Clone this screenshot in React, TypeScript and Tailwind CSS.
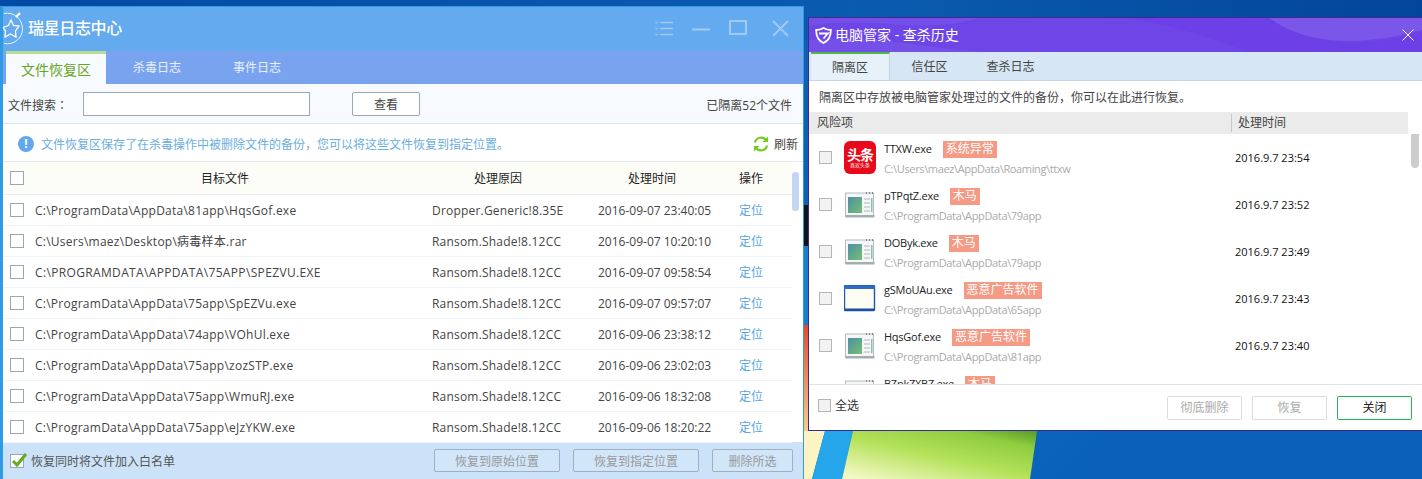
const FONT = "font-['Open_Sans','Noto_Sans_CJK_SC',sans-serif]";

const leftRows = [
  ["C:\\ProgramData\\AppData\\81app\\HqsGof.exe", "Dropper.Generic!8.35E", "2016-09-07 23:40:05"],
  ["C:\\Users\\maez\\Desktop\\病毒样本.rar", "Ransom.Shade!8.12CC", "2016-09-07 10:20:10"],
  ["C:\\PROGRAMDATA\\APPDATA\\75APP\\SPEZVU.EXE", "Ransom.Shade!8.12CC", "2016-09-07 09:58:54"],
  ["C:\\ProgramData\\AppData\\75app\\SpEZVu.exe", "Ransom.Shade!8.12CC", "2016-09-07 09:57:07"],
  ["C:\\ProgramData\\AppData\\74app\\VOhUl.exe", "Ransom.Shade!8.12CC", "2016-09-06 23:38:12"],
  ["C:\\ProgramData\\AppData\\75app\\zozSTP.exe", "Ransom.Shade!8.12CC", "2016-09-06 23:02:03"],
  ["C:\\ProgramData\\AppData\\75app\\WmuRJ.exe", "Ransom.Shade!8.12CC", "2016-09-06 18:32:08"],
  ["C:\\ProgramData\\AppData\\75app\\eJzYKW.exe", "Ransom.Shade!8.12CC", "2016-09-06 18:20:22"],
];

const rightRows = [
  { name: "TTXW.exe", tag: "系统异常", path: "C:\\Users\\maez\\AppData\\Roaming\\ttxw", date: "2016.9.7 23:54", icon: "red" },
  { name: "pTPqtZ.exe", tag: "木马", path: "C:\\ProgramData\\AppData\\79app", date: "2016.9.7 23:52", icon: "app" },
  { name: "DOByk.exe", tag: "木马", path: "C:\\ProgramData\\AppData\\79app", date: "2016.9.7 23:49", icon: "app" },
  { name: "gSMoUAu.exe", tag: "恶意广告软件", path: "C:\\ProgramData\\AppData\\65app", date: "2016.9.7 23:43", icon: "win" },
  { name: "HqsGof.exe", tag: "恶意广告软件", path: "C:\\ProgramData\\AppData\\81app", date: "2016.9.7 23:40", icon: "app" },
  { name: "BZpkZXBZ.exe", tag: "木马", path: "", date: "", icon: "app" },
];

function Wallpaper() {
  return (
    <svg className="absolute inset-0" width="1422" height="479" viewBox="0 0 1422 479">
      <defs>
        <linearGradient id="top" x1="0" x2="1" y1="0" y2="0">
          <stop offset="0" stopColor="#0349a6" />
          <stop offset="0.6" stopColor="#0a5cb0" />
          <stop offset="1" stopColor="#03459a" />
        </linearGradient>
        <linearGradient id="bot" x1="0" x2="1" y1="0" y2="0.3">
          <stop offset="0" stopColor="#1292ea" />
          <stop offset="1" stopColor="#0a5fb8" />
        </linearGradient>
        <linearGradient id="leaf" x1="0.1" x2="1" y1="1" y2="0">
          <stop offset="0" stopColor="#f2f9c4" />
          <stop offset="0.45" stopColor="#b4e25a" />
          <stop offset="0.8" stopColor="#8fcc40" />
          <stop offset="1" stopColor="#569a26" />
        </linearGradient>
        <linearGradient id="edge" x1="0" x2="0" y1="0" y2="1">
          <stop offset="0" stopColor="#e8482a" />
          <stop offset="1" stopColor="#f5d48a" />
        </linearGradient>
      </defs>
      <rect width="1422" height="479" fill="url(#bot)" />
      <rect width="1422" height="40" fill="url(#top)" />
      <rect x="804" y="40" width="4" height="165" fill="#0d60b2" />
      <rect x="804" y="205" width="4" height="41" fill="#10131a" />
      <rect x="804" y="246" width="4" height="79" fill="#1a7ec8" />
      <rect x="804" y="325" width="4" height="110" fill="url(#edge)" />
      <polygon points="804,431 825,431 812,479 804,479" fill="#fdf4c4" />
      <polygon points="825,431 853,431 842,479 812,479" fill="#25a6ea" />
      <polygon points="853,431 1037,431 1030,479 842,479" fill="url(#leaf)" />
    </svg>
  );
}

function StarLogo() {
  return (
    <svg width="22" height="34" viewBox="0 0 22 34" fill="none" stroke="#fff" className="shrink-0">
      <path d="M1 1.5 C11 -0.5 19.5 7 19.5 17 C19.5 26 11 33.5 1 31.5" strokeWidth="1" opacity="0.85" />
      <path d="M8 8 L10.5 13.5 L16 14 L12.5 19 L13 25 L7.5 22 L2 25 L2.5 19 L0 15.5 L5.5 13.5 Z" strokeWidth="1.3" />
      <path d="M13 5 L17 1" strokeWidth="2.4" />
    </svg>
  );
}

function WinControls() {
  return (
    <svg width="136" height="20" viewBox="0 0 136 20" fill="none" stroke="#9fcaf5" strokeWidth="1.6" className="shrink-0">
      <path d="M0.5 3.5 h2 M5 3.5 h13 M0.5 9.5 h2 M5 9.5 h13 M0.5 15.5 h2 M5 15.5 h13" />
      <path d="M37 10.5 h18" strokeWidth="2" />
      <rect x="75" y="2" width="16" height="13" strokeWidth="2" />
      <path d="M118 2 L133 17 M133 2 L118 17" strokeWidth="1.8" />
    </svg>
  );
}

function Box({ tone = "left" }: { tone?: "left" | "right" }) {
  return (
    <span
      className={
        tone === "left"
          ? "block h-[14px] w-[14px] shrink-0 border border-[#9aa8b5] bg-white"
          : "block h-[13px] w-[13px] shrink-0 border border-[#b5b5b5] bg-[#f2f2f2]"
      }
    />
  );
}

function AppIcon({ kind }: { kind: string }) {
  if (kind === "red") {
    return (
      <div className="flex h-[33px] w-[32px] shrink-0 flex-col items-center justify-center rounded-[6px] bg-[#e8091a] text-white">
        <span className="text-[14px] font-bold leading-[15px] tracking-[-1px]">头条</span>
        <span className="text-[5px] leading-[6px]">喜欢头条</span>
      </div>
    );
  }
  if (kind === "win") {
    return (
      <svg width="32" height="27" viewBox="0 0 32 27" className="shrink-0">
        <rect x="0.5" y="0.5" width="30" height="25" rx="1" fill="#fdfdf4" stroke="#1f56ad" strokeWidth="1.4" />
        <rect x="0.5" y="0.5" width="30" height="3.5" fill="#2d6cc4" />
        <rect x="0.5" y="23.5" width="30" height="2.5" fill="#1f4fa0" />
      </svg>
    );
  }
  return (
    <svg width="30" height="26" viewBox="0 0 30 26" className="ml-[1px] shrink-0">
      <defs>
        <linearGradient id="scr" x1="0" x2="1" y1="0" y2="1">
          <stop offset="0" stopColor="#4d8fa8" />
          <stop offset="1" stopColor="#76bf72" />
        </linearGradient>
      </defs>
      <rect x="0.5" y="1" width="28" height="23.5" fill="#f4f6f7" stroke="#b4bcc2" />
      <rect x="0.5" y="23" width="29" height="2.5" fill="#a5adb3" />
      <rect x="3" y="5" width="14" height="16" fill="url(#scr)" />
      <path d="M19 7h6M19 11h6M19 15h6M19 19h6" stroke="#d3d7da" strokeWidth="2" />
      <rect x="26" y="6" width="1.5" height="14" fill="#8cc0ae" />
      <path d="M21 1h1M24 1h1M27 1h1" stroke="#666" strokeWidth="1.4" />
    </svg>
  );
}

function LeftWindow() {
  return (
    <div className="absolute left-0 top-[6px] flex h-[473px] w-[804px] flex-col border-l-[3px] border-r border-t border-[#2f9be4] bg-white text-[12px] text-[#444]">
      <div className="flex h-[44px] items-center justify-between bg-[#64aaee] pr-[12px]">
        <div className="flex items-center gap-[3px]">
          <StarLogo />
          <span className="pb-[2px] text-[16px] font-medium leading-none tracking-[-0.35px] text-white">瑞星日志中心</span>
        </div>
        <WinControls />
      </div>
      <div className="flex h-[33px] items-end bg-[#7aa3ef] pl-[3px] text-[#e8f0ff]">
        <div className="flex h-[33px] w-[100px] items-center justify-center border-t-[3px] border-[#b9dc90] bg-[#f7fbff] text-[14px] text-[#6aa51e]">文件恢复区</div>
        <div className="ml-[1px] flex h-[33px] w-[100px] items-center justify-center">杀毒日志</div>
        <div className="flex h-[33px] w-[100px] items-center justify-center">事件日志</div>
      </div>
      <div className="flex h-[40px] items-center justify-between border-b border-[#d5e3ef] bg-[#f7fbff] pl-[5px] pr-[11px]">
        <div className="flex items-center">
          <span className="w-[75px] pt-[4px]">
            文件搜索<span className="font-['Noto_Sans_CJK_TC',sans-serif]">：</span>
          </span>
          <div className="h-[24px] w-[227px] border border-[#9aa8b5] bg-white" />
          <div className="ml-[42px] flex h-[24px] w-[68px] items-center justify-center rounded-[2px] border border-[#9aa8b5] bg-white pt-[2px]">查看</div>
        </div>
        <span className="pt-[4px]">已隔离52个文件</span>
      </div>
      <div className="flex h-[38px] items-center justify-between border-b border-[#e6e9ec] pl-[15px] pr-[5px] pt-[2px]">
        <div className="flex items-center gap-[7px] text-[#6aaee0]">
          <span className="flex h-[16px] w-[16px] items-center justify-center rounded-full bg-[#62a8ee] text-[12px] font-bold leading-none text-white">!</span>
          <span className="pt-[2px]">文件恢复区保存了在杀毒操作中被删除文件的备份，您可以将这些文件恢复到指定位置。</span>
        </div>
        <div className="flex items-center gap-[5px]">
          <svg width="16" height="16" viewBox="0 0 16 16" fill="none" stroke="#76cc1e" strokeWidth="2.2">
            <path d="M2 6.5 A6.2 6.2 0 0 1 13 4" />
            <path d="M14 9.5 A6.2 6.2 0 0 1 3 12" />
            <path d="M15 0.5 V6 H9.5 Z M1 15.5 V10 H6.5 Z" fill="#76cc1e" stroke="none" />
          </svg>
          <span className="pt-[2px]">刷新</span>
        </div>
      </div>
      <div className="relative flex min-h-0 flex-1 flex-col">
        <div className="mr-[11px] flex h-[33px] shrink-0 items-center border-b border-[#e8eef2] bg-[#fdfdf8] pl-[7px] text-[#222]">
          <Box />
          <span className="ml-[11px] w-[397px] pl-[166px] pt-[1px]">目标文件</span>
          <span className="w-[166px] pl-[42px] pt-[1px]">处理原因</span>
          <span className="w-[141px] pl-[30px] pt-[1px]">处理时间</span>
          <span className="pt-[1px]">操作</span>
        </div>
        {leftRows.map((r, i) => (
          <div key={r[2]} className="mr-[11px] flex h-[31px] shrink-0 items-center border-b border-[#f0f4f8] pl-[7px]">
            <Box />
            <span className={i === 2 ? "ml-[11px] w-[397px] truncate pt-[2px] tracking-[0.35px]" : "ml-[11px] w-[397px] truncate pt-[2px] tracking-[0.25px]"}>{r[0]}</span>
            <span className="w-[166px] truncate pt-[2px] tracking-[0.2px]">{r[1]}</span>
            <span className="w-[141px] pt-[2px]">{r[2]}</span>
            <span className="pt-[2px] text-[#5aa5e0]">定位</span>
          </div>
        ))}
        <div className="absolute right-[4px] top-[10px] h-[39px] w-[7px] rounded-[3px] bg-[#c2d6f2]" />
      </div>
      <div className="flex h-[37px] shrink-0 items-center justify-between bg-[#cbe2f9] pl-[7px] pr-[10px] text-[#555]">
        <div className="flex items-center gap-[7px]">
          <span className="relative block h-[14px] w-[14px] border border-[#9aa8b5] bg-white">
            <svg className="absolute -top-[3px] left-0" width="17" height="16" viewBox="0 0 17 16" fill="none" stroke="#62ab1c" strokeWidth="3">
              <path d="M2 9 L6 13 L15 2" />
            </svg>
          </span>
          <span className="pt-[2px]">恢复同时将文件加入白名单</span>
        </div>
        <div className="flex gap-[13px] text-[#999]">
          <div className="flex h-[23px] w-[126px] items-center justify-center rounded-[2px] border border-[#9fb0c0] bg-[#d2e6fa] pt-[2px]">恢复到原始位置</div>
          <div className="flex h-[23px] w-[126px] items-center justify-center rounded-[2px] border border-[#9fb0c0] bg-[#d2e6fa] pt-[2px]">恢复到指定位置</div>
          <div className="flex h-[23px] w-[81px] items-center justify-center rounded-[2px] border border-[#9fb0c0] bg-[#d2e6fa] pt-[2px]">删除所选</div>
        </div>
      </div>
    </div>
  );
}

function RightWindow() {
  return (
    <div className="absolute left-[808px] top-[17px] flex h-[414px] w-[614px] flex-col border-b border-l border-t border-[#3b2a90] bg-white text-[12px] text-[#444]">
      <div className="relative flex h-[34px] items-center justify-between overflow-hidden bg-[#6e45e6] pl-[6px] pr-[8px]">
        <svg className="absolute inset-0" width="613" height="34" viewBox="0 0 613 34">
          <path d="M0 8 C60 -4 110 18 170 0 H0 Z" fill="#7550e8" />
          <path d="M460 0 C490 22 540 32 613 12 V0 Z" fill="#7a57e9" />
          <path d="M0 22 C70 14 120 34 190 34 H0 Z" fill="#7450e8" />
          <path d="M320 0 C370 8 400 20 440 34 H613 V14 C540 34 490 22 460 0 Z" fill="#6d3fe6" />
        </svg>
        <div className="relative flex items-center gap-[3px]">
          <svg width="17" height="17" viewBox="0 0 17 17" fill="none" stroke="#fff" strokeWidth="1.8">
            <path d="M8.5 1 C6 2.6 3.5 3 1.2 3 C1 9 3.5 13.5 8.5 16 C13.5 13.5 16 9 15.8 3 C13.5 3 11 2.6 8.5 1 Z" />
            <path d="M4 6.5 H13 L8.5 11.5" />
          </svg>
          <span className="text-[14px] leading-none text-white">电脑管家 - 查杀历史</span>
        </div>
        <svg className="relative" width="12" height="12" viewBox="0 0 12 12" stroke="#fff" strokeWidth="1">
          <path d="M0.5 0.5 L11.5 11.5 M11.5 0.5 L0.5 11.5" />
        </svg>
      </div>
      <div className="flex h-[29px] items-end border-b border-[#c4d5ea] bg-[#d6e6f5] pl-[2px]">
        <div className="flex h-[28px] w-[79px] items-center justify-center border-r border-t-2 border-r-[#c4d5ea] border-t-[#4cb848] bg-[#e6f1f9] pt-[1px]">隔离区</div>
        <div className="flex h-[28px] w-[79px] items-center justify-center pt-[2px]">信任区</div>
        <div className="flex h-[28px] w-[83px] items-center justify-center pt-[2px]">查杀日志</div>
      </div>
      <div className="flex h-[31px] items-center pl-[10px] pt-[2px]">隔离区中存放被电脑管家处理过的文件的备份，你可以在此进行恢复。</div>
      <div className="flex h-[22px] w-[599px] items-center bg-[#ebebeb] pl-[8px]">
        <span className="w-[414px]">风险项</span>
        <span className="border-l border-[#c8c8c8] pl-[6px]">处理时间</span>
      </div>
      <div className="relative min-h-0 flex-1 overflow-hidden">
        {rightRows.map((r) => (
          <div key={r.name} className="flex h-[47px] shrink-0 items-center pl-[10px]">
            <Box tone="right" />
            <div className="ml-[12px] flex w-[40px] shrink-0">
              <AppIcon kind={r.icon} />
            </div>
            <div className="w-[351px] shrink-0 pt-[2px]">
              <div className="flex h-[19px] items-center">
                <span className="text-[11px] tracking-[-0.25px] text-[#222]">{r.name}</span>
                <span className="ml-[11px] flex h-[17px] items-center bg-[#f49a85] px-[3px] text-[12px] leading-none text-white">{r.tag}</span>
              </div>
              <div className="h-[19px] text-[11px] leading-[19px] tracking-[-0.36px] text-[#aaa]">{r.path}</div>
            </div>
            <span className="pt-[2px] text-[11px] font-medium text-[#111]">{r.date}</span>
          </div>
        ))}
        <div className="absolute right-[3px] top-[-7px] h-[41px] w-[8px] rounded-[4px] bg-[#cdcdcd]" />
      </div>
      <div className="flex h-[46px] items-center justify-between border-t border-[#dde4ea] pl-[9px] pr-[10px]">
        <div className="mb-[4px] flex items-center gap-[4px] text-[#333]">
          <Box tone="right" />
          <span>全选</span>
        </div>
        <div className="flex gap-[10px]">
          <div className="flex h-[24px] w-[75px] items-center justify-center rounded-[2px] border border-[#dcdcdc] text-[#aaa]">彻底删除</div>
          <div className="flex h-[24px] w-[75px] items-center justify-center rounded-[2px] border border-[#dcdcdc] text-[#aaa]">恢复</div>
          <div className="flex h-[24px] w-[75px] items-center justify-center rounded-[2px] border border-[#1db954] text-[#222]">关闭</div>
        </div>
      </div>
    </div>
  );
}

export default function App() {
  return (
    <div className={`relative h-[479px] w-[1422px] overflow-hidden ${FONT}`}>
      <Wallpaper />
      <LeftWindow />
      <RightWindow />
    </div>
  );
}
